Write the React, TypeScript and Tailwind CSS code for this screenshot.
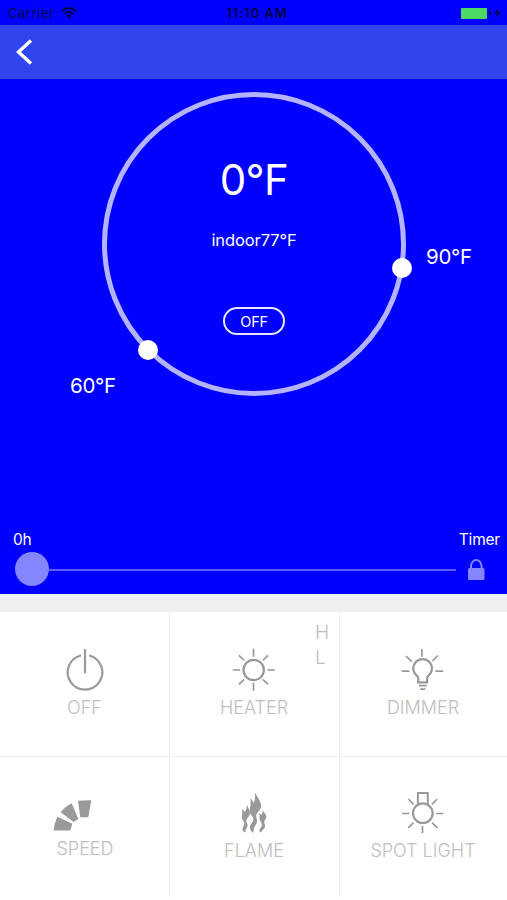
import React from 'react';

const ICON = {
  width: 48,
  height: 48,
  viewBox: '0 0 48 48',
  fill: 'none',
  stroke: '#999999',
  strokeWidth: 1.7,
};

const OffIcon = () => (
  <svg {...ICON} strokeWidth={2.2} strokeLinecap="round">
    <path d="M19 9.7A17.3 17.3 0 1 0 29 9.7" />
    <path d="M24 4v22.5" />
  </svg>
);

const HeaterIcon = () => (
  <svg {...ICON}>
    <circle cx="23.7" cy="24" r="10.2" strokeWidth={2.2} />
    <path d="M23.5 2.7v8M23.5 36.7v8M2.7 24H10.2M37.5 24H45M9 9.3l5.2 5.2M38 9.3l-5.2 5.2M9 38.3l5.2-5M38 38.3l-5.2-5" />
  </svg>
);

const DimmerIcon = () => (
  <svg {...ICON}>
    <path
      strokeWidth={2.2}
      d="M19.3 36.3v-4.2c0-1.2-.8-1.8-1.8-2.7a9.3 9.3 0 1 1 12.2 0c-1 .9-1.6 1.5-1.6 2.7v4.2z"
    />
    <path d="M20 39.7h7.8M21.3 43.2h4.9" strokeWidth={1.8} />
    <path d="M22.9 3v7.8M2.7 25.2h7.8M36.4 25.2h7.8M7 10l5.7 5.7M38.9 9.5l-5.5 5.5" />
  </svg>
);

const SpeedIcon = () => (
  <svg {...ICON} className="mr-6" fill="#999999" stroke="none">
    <path d="M29 10.8q6.6-.6 13.3-.5l-3 17h-8z" />
    <path d="M11.7 22.3q4.6-6 11-9L29.3 29l-4.6 2.9z" />
    <path d="M8.3 26.7l15 7-2 6.7H4.7q.6-7 3.6-13.7z" />
  </svg>
);

const FlameIcon = () => (
  <svg {...ICON} fill="#999999" stroke="none">
    <path d="M25.3 2.3c.8 4.4 5.500 7.500 5.700 13 .1 5.700-4.800 7.200-4.800 10.500 0 2.200 1.200 3.600.7 6.300-.6 3.600-4.300 5.400-3.200 10.600-2.300-1-3.900-2.700-3.800-5 .1-3.800 3.700-5.500 3.400-9-.2-2.800-3.500-4-3.600-7.500-.1-3.600 1.800-6.300.5-12.800 1.700 1.200 2.800 2.700 3.300 4.700 2.200-3.200 1.300-7.300 1.800-10.800z" />
    <path d="M17.1 14.6c.2 3.100 2.800 4.700 2.900 8.200.1 3.800-3.600 5.200-3.600 8.200 0 1.600 1.400 2.600 1.200 4.600-.3 2.700-3 3.700-1.900 7-2-.6-3.400-2-3.200-3.900.2-2.400 2-3.500 1.800-5.700-.3-2.200-2.300-2.900-2.400-5.600-.1-2.500 1.100-4.100-.1-8.200 1.500.6 2.500 1.500 3 2.700 1.700-2 1.800-4.500 2.300-7.300z" />
    <path d="M32.5 19.6c.3 2.400 3.700 3.900 3.800 6.800.2 2.900-2.100 3.700-2.100 5.800 0 1.400 1.100 2.400.8 4.300-.5 2.900-3.100 3-3.800 6.200-1.400-.7-2-1.700-1.700-2.900.4-1.600 2.300-2.600 2.400-4.700.1-2.400-2.100-3.500-2.300-6-.1-2 .3-3.500-.5-5.800 1.200.3 2.100.9 2.500 1.600.9-1.500 1-3.500.9-5.300z" />
  </svg>
);

const SpotLightIcon = () => (
  <svg {...ICON}>
    <circle cx="23.8" cy="23.2" r="9.8" strokeWidth={2.2} />
    <path d="M18.9 13.9V3h9.900v10.900" strokeWidth={2} />
    <path d="M3 23.5h7.500M37.200 23.500h7.300M23.500 36v7.200M9.300 9l5.200 5.300M38.100 9l-5.200 5.300M9.300 37.900l5.200-5.200M38.300 37.900l-5.200-5.200" />
  </svg>
);

const tiles: { label: string; icon: React.ReactNode; tile: string; text: string; levels?: boolean }[] = [
  { label: 'OFF', icon: <OffIcon />, tile: 'pt-[34px] border-r border-b', text: 'mt-0.5' },
  { label: 'HEATER', icon: <HeaterIcon />, tile: 'pt-[34px] border-b pr-px', text: 'mt-0.5', levels: true },
  { label: 'DIMMER', icon: <DimmerIcon />, tile: 'pt-[34px] border-l border-b pr-px', text: 'mt-0.5' },
  { label: 'SPEED', icon: <SpeedIcon />, tile: 'pt-[33px] border-r', text: '-mt-px pl-px' },
  { label: 'FLAME', icon: <FlameIcon />, tile: 'pt-[33px] pr-px', text: 'mt-px' },
  { label: 'SPOT LIGHT', icon: <SpotLightIcon />, tile: 'pt-[33px] border-l pr-px', text: 'mt-px' },
];

const StatusBar = () => (
  <div className="h-[25px] pt-px grid grid-cols-3 items-center text-[13px] leading-5 text-[#000040]">
    <div className="flex items-center gap-[7px] pl-2">
      <span className="tracking-[0.55px]">Carrier</span>
      <svg width="16" height="12" viewBox="0 0 16 12" fill="none" stroke="currentColor" strokeWidth="1.9">
        <path d="M1 4.2Q8-2 15 4.2M3.4 6.8q4.6-3.8 9.2 0" />
        <path d="M8 11.5 5.4 8.7q2.6-1.9 5.2 0z" fill="currentColor" stroke="none" />
      </svg>
    </div>
    <div className="text-center font-semibold pl-[7px] tracking-[0.95px] whitespace-nowrap">11:10 AM</div>
    <div className="flex items-center justify-end pr-[6px]">
      <div className="w-[26px] h-[11px] bg-[#4cd964] rounded-[1px]" />
      <div className="w-[2px] h-1 ml-[2px] rounded-r bg-[#000040]" />
      <svg className="ml-[3px]" width="7" height="10" viewBox="0 0 7 10" fill="currentColor">
        <path d="M4.3 0 .3 5.6h2.5L2 10l4.5-5.8H3.9z" />
      </svg>
    </div>
  </div>
);

const Dial = () => (
  <div className="relative w-[304px] h-[304px] mx-auto mt-[13px] left-[0.5px]">
    <svg className="absolute inset-0 overflow-visible" width="304" height="304" viewBox="0 0 304 304">
      <circle cx="152" cy="152" r="149.5" fill="none" stroke="#b3b3ff" strokeWidth="5" />
      <circle cx="300" cy="176" r="10" fill="white" />
      <circle cx="46" cy="258" r="10" fill="white" />
    </svg>
    <div className="flex flex-col items-center">
      <div className="mt-[63px] text-[42px] leading-[50px] tracking-[-0.6px]">0°F</div>
      <div className="mt-[25px] text-[16.5px] leading-5 tracking-[-0.1px]">indoor77°F</div>
      <div className="mt-[57px] w-[62px] h-7 rounded-full border-2 border-[#e6e6ff] flex items-center justify-center text-[14.5px] tracking-[-0.3px] pt-px">
        OFF
      </div>
    </div>
    <span className="absolute left-[324px] top-[153px] text-[20.5px] leading-6 tracking-[-0.3px]">90°F</span>
    <span className="absolute left-[-32px] top-[282px] text-[20.5px] leading-6 tracking-[-0.3px]">60°F</span>
  </div>
);

const Timer = () => (
  <div className="mt-auto pb-[8px]">
    <div className="flex justify-between pl-[13px] pr-[7px] text-[15.5px] leading-5 tracking-[-0.2px]">
      <span>0h</span>
      <span>Timer</span>
    </div>
    <div className="flex items-center h-[34px] pl-[14.5px] mt-[2px]">
      <div className="size-[34px] rounded-full bg-[#8585ff]" />
      <div className="w-[407px] h-[2px] mt-[2px] bg-[#5a5aff]" />
      <svg className="ml-[11px] mt-[2px]" width="18" height="22" viewBox="0 0 18 22">
        <path d="M4 10V7a5 5.6 0 0 1 10.5 0V10" fill="none" stroke="#8585ff" strokeWidth="2" />
        <rect x="1" y="9" width="16.5" height="12" rx="1.5" fill="#8585ff" />
      </svg>
    </div>
  </div>
);

const App = () => {
  return (
    <div className="w-[507px] h-[900px] flex flex-col overflow-hidden bg-white font-['Inter',sans-serif]">
      <div className="h-[594px] bg-[#0000ff] text-white flex flex-col">
        <StatusBar />
        <div className="h-[54px] shrink-0 bg-[#3045ee] flex items-center pl-4">
          <svg width="17" height="26" viewBox="0 0 17 26" fill="none" stroke="white" strokeWidth="3.4">
            <path d="M15 1.5 2.5 13 15 24.5" />
          </svg>
        </div>
        <Dial />
        <Timer />
      </div>
      <div className="h-[18px] bg-[#efeff2]" />
      <div className="grid grid-cols-[170px_169px_168px] grid-rows-[145px_140px]">
        {tiles.map(({ label, icon, tile, text, levels }) => (
          <div key={label} className={`${tile} relative flex flex-col items-center border-[#eeeeee]`}>
            {icon}
            <span className={`${text} text-[18px] leading-6 font-light text-[#bebebe]`}>{label}</span>
            {levels && (
              <div className="absolute right-[10px] top-2 flex flex-col text-[19px] leading-[25px] font-light text-[#bebebe]">
                <span>H</span>
                <span>L</span>
              </div>
            )}
          </div>
        ))}
      </div>
    </div>
  );
};

export default App;
